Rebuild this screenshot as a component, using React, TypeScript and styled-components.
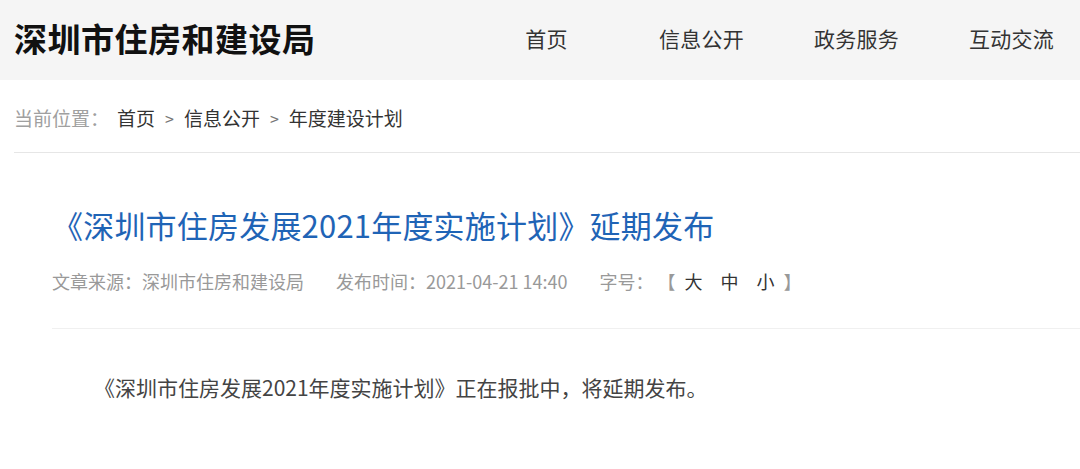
import React from "react";
import styled, { createGlobalStyle } from "styled-components";

const GlobalStyle = createGlobalStyle`
  html, body {
    margin: 0;
    padding: 0;
    background: #ffffff;
    font-family: "Noto Sans CJK SC", "Noto Sans", sans-serif;
    overflow: hidden;
  }
`;

const navItems = ["首页", "信息公开", "政务服务", "互动交流"];
const crumbs = ["首页", "信息公开", "年度建设计划"];

const App = () => {
  return (
    <>
      <GlobalStyle />
      <Page>
        <Header>
          <SiteName>深圳市住房和建设局</SiteName>
          <Nav>
            {navItems.map((item) => (
              <NavItem key={item}>{item}</NavItem>
            ))}
          </Nav>
        </Header>
        <Crumbs>
          <CrumbLabel>当前位置：</CrumbLabel>
          {crumbs.map((c, i) => (
            <React.Fragment key={c}>
              {i > 0 && <CrumbSep>&gt;</CrumbSep>}
              <CrumbLink>{c}</CrumbLink>
            </React.Fragment>
          ))}
        </Crumbs>
        <Article>
          <ArticleHead>
            <Title>《深圳市住房发展2021年度实施计划》延期发布</Title>
            <Meta>
              <MetaItem>文章来源：深圳市住房和建设局</MetaItem>
              <MetaItem>发布时间：2021-04-21 14:40</MetaItem>
              <MetaItem>
                字号：
                <SizeSwitch>
                  【<SizeLink>大</SizeLink>
                  <SizeLink>中</SizeLink>
                  <SizeLink>小</SizeLink>】
                </SizeSwitch>
              </MetaItem>
            </Meta>
          </ArticleHead>
          <Body>
            《深圳市住房发展2021年度实施计划》正在报批中，将延期发布。
          </Body>
        </Article>
      </Page>
    </>
  );
};

export default App;

const Page = styled.div`
  width: 1080px;
  height: 469px;
  overflow: hidden;
`;

const Header = styled.div`
  height: 80px;
  background: #f5f5f5;
  display: flex;
  align-items: center;
  padding-left: 14px;
  overflow: hidden;
`;

const SiteName = styled.div`
  font-size: 33px;
  font-weight: 700;
  color: #111111;
  letter-spacing: 0.5px;
  margin-top: -4px;
  flex-shrink: 0;
`;

const Nav = styled.div`
  display: flex;
  margin-left: auto;
  margin-right: -9px;
  flex-shrink: 0;
`;

const NavItem = styled.div`
  width: 155px;
  text-align: center;
  font-size: 21px;
  color: #333333;
  letter-spacing: 0.3px;
  margin-top: -4px;
`;

const Crumbs = styled.div`
  margin-left: 14px;
  padding: 28px 0 24px;
  line-height: 20px;
  font-size: 19px;
  display: flex;
  align-items: center;
  border-bottom: 1px solid #e6e6e6;
`;

const CrumbLabel = styled.span`
  color: #a0a0a0;
  margin-right: 8px;
`;

const CrumbLink = styled.span`
  color: #333333;
`;

const CrumbSep = styled.span`
  color: #777777;
  font-size: 16px;
  margin: 0 10px;
`;

const Article = styled.div`
  padding-left: 52px;
`;

const ArticleHead = styled.div`
  padding: 52px 0 35px;
  border-bottom: 1px solid #f0f0f0;
`;

const Title = styled.h1`
  margin: 0;
  font-size: 31px;
  line-height: 40px;
  font-weight: 400;
  letter-spacing: 0.2px;
  color: #1f64b6;
`;

const Meta = styled.div`
  margin-top: 24px;
  display: flex;
  gap: 32px;
  font-size: 18px;
  line-height: 24px;
  color: #999999;
`;

const MetaItem = styled.span`
  display: flex;
  align-items: center;
`;

const SizeSwitch = styled.span`
  margin-left: 4px;
  color: #999999;
`;

const SizeLink = styled.span`
  color: #333333;
  margin: 0 9px;
`;

const Body = styled.p`
  margin: 43px 0 0;
  text-indent: 2em;
  font-size: 21px;
  line-height: 30px;
  color: #444444;
`;
